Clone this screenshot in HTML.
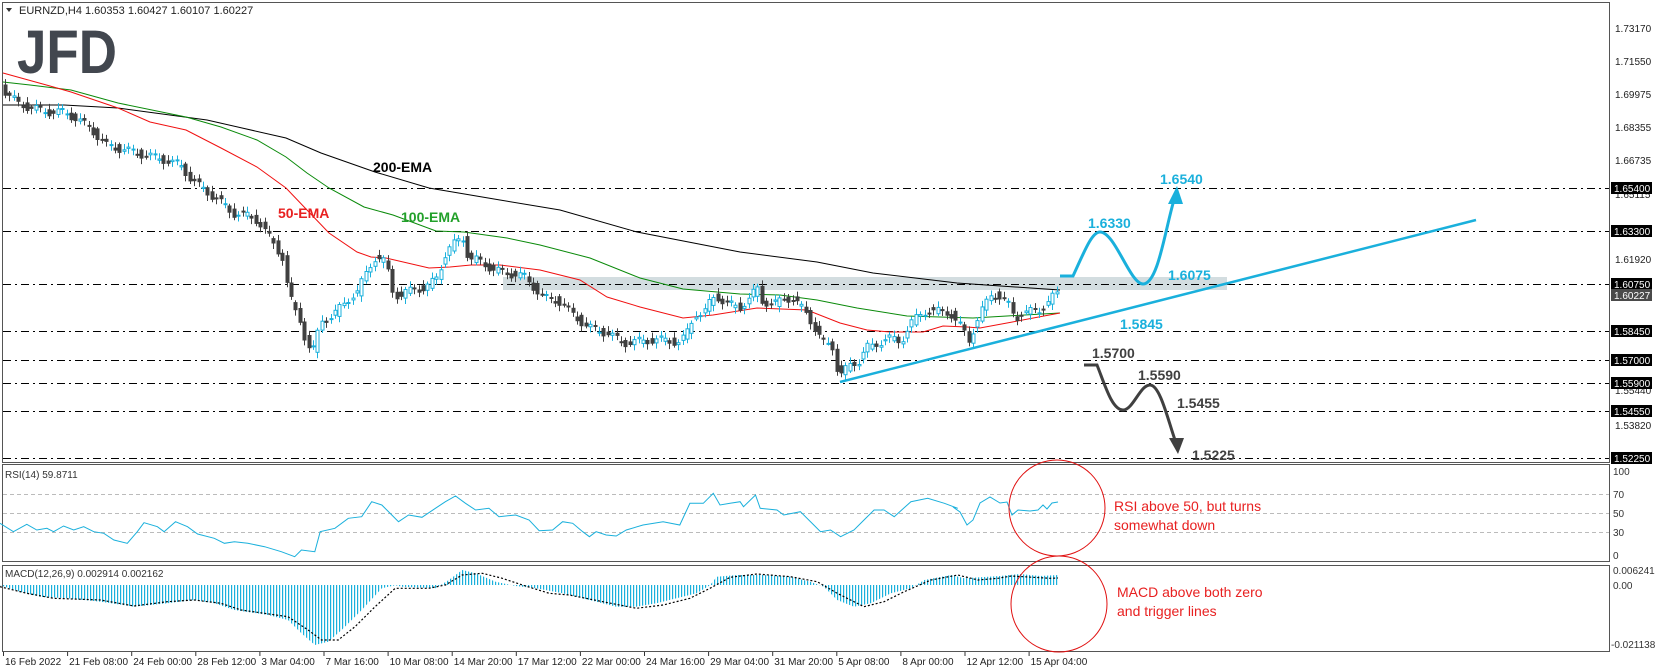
<!DOCTYPE html>
<html><head><meta charset="utf-8"><style>
html,body{margin:0;padding:0;background:#fff;}
svg{display:block;font-family:"Liberation Sans",sans-serif;}
</style></head><body>
<svg id="s" width="1655" height="672" viewBox="0 0 1655 672" xmlns="http://www.w3.org/2000/svg">
<defs>
<pattern id="hb" width="3" height="10" patternUnits="userSpaceOnUse"><rect x="0" y="0" width="1.2" height="10" fill="#1ab0dc"/></pattern>
</defs>
<rect width="1655" height="672" fill="#fff"/>
<g fill="none" stroke="#555" stroke-width="1">
<rect x="2.5" y="2.5" width="1607" height="460"/>
<rect x="2.5" y="464.5" width="1607" height="97"/>
<rect x="2.5" y="565.5" width="1607" height="86"/>
</g>
<path d="M6 8 L12 8 L9 12 Z" fill="#333"/>
<text x="19" y="14" font-size="11" fill="#222">EURNZD,H4  1.60353 1.60427 1.60107 1.60227</text>
<text x="17" y="73" font-size="61" font-weight="bold" fill="#42474f" textLength="100" lengthAdjust="spacingAndGlyphs">JFD</text>
<rect x="503" y="277" width="724" height="13" fill="#d3dde0"/>
<g stroke="#000" stroke-width="1" stroke-dasharray="8 4 2 4" fill="none">
<line x1="3" y1="188.5" x2="1609" y2="188.5"/>
<line x1="3" y1="231.5" x2="1609" y2="231.5"/>
<line x1="3" y1="284.5" x2="1609" y2="284.5"/>
<line x1="3" y1="331.5" x2="1609" y2="331.5"/>
<line x1="3" y1="360.5" x2="1609" y2="360.5"/>
<line x1="3" y1="383.5" x2="1609" y2="383.5"/>
<line x1="3" y1="411.5" x2="1609" y2="411.5"/>
<line x1="3" y1="458.5" x2="1609" y2="458.5"/>
</g>
<polyline fill="none" stroke="#000" stroke-width="1" points="3,105 64,105 118,108 207,120 286,138 321,153 375,172 429,188 500,200 560,210 637,232 740,252 817,262 873,273 957,283 1060,290"/>
<polyline fill="none" stroke="#0a8a0a" stroke-width="1" points="3,82 30,85 71,90 118,103 186,117 221,127 257,140 286,157 307,173 329,188 364,207 393,215 436,231 464,232 507,238 540,245 590,258 640,278 683,289 740,294 780,295 817,300 857,308 907,316 973,318 1007,316 1060,313"/>
<polyline fill="none" stroke="#f01010" stroke-width="1" points="3,73 50,86 71,92 118,108 150,122 186,130 221,148 257,167 286,188 307,210 329,233 357,252 371,257 386,258 429,268 450,267 471,265 500,265 540,270 580,280 607,297 640,307 683,318 713,315 757,308 807,310 840,323 867,330 890,332 923,332 943,326 967,327 980,328 1007,323 1060,313"/>
<g id="candles"></g>
<line x1="840" y1="382" x2="1476" y2="220" stroke="#1ab0dc" stroke-width="2.5"/>
<g font-size="14" font-weight="bold">
<text x="373" y="172" fill="#000">200-EMA</text>
<text x="278" y="218" fill="#e82020">50-EMA</text>
<text x="401" y="222" fill="#22a02a">100-EMA</text>
</g>
<path d="M1060 276 L1073 276 C1085 250 1092 232 1100 232 C1115 232 1130 284 1143 284 C1158 284 1165 230 1174 200" fill="none" stroke="#1ab0dc" stroke-width="3"/>
<path d="M1177 186 L1168 204 L1183 204 Z" fill="#1ab0dc"/>
<g font-size="14" font-weight="bold" fill="#1ab0dc">
<text x="1160" y="184">1.6540</text>
<text x="1088" y="228">1.6330</text>
<text x="1168" y="280">1.6075</text>
<text x="1120" y="329">1.5845</text>
</g>
<path d="M1084 365 L1097 365 C1105 385 1112 410 1123 410 C1133 410 1140 385 1150 385 C1160 385 1168 420 1175 440" fill="none" stroke="#404040" stroke-width="3"/>
<path d="M1178 454 L1169 438 L1184 438 Z" fill="#404040"/>
<g font-size="14" font-weight="bold" fill="#404040">
<text x="1092" y="358">1.5700</text>
<text x="1138" y="380">1.5590</text>
<text x="1177" y="408">1.5455</text>
<text x="1192" y="460">1.5225</text>
</g>
<g font-size="10" fill="#222">
<text x="1615" y="32">1.73170</text>
<text x="1615" y="65">1.71550</text>
<text x="1615" y="98">1.69975</text>
<text x="1615" y="131">1.68355</text>
<text x="1615" y="164">1.66735</text>
<text x="1615" y="198">1.65115</text>
<text x="1615" y="263">1.61920</text>
<text x="1615" y="394">1.55440</text>
<text x="1615" y="429">1.53820</text>
</g>
<g fill="#000">
<rect x="1611" y="182" width="41" height="12"/><rect x="1611" y="225" width="41" height="12"/>
<rect x="1611" y="278" width="41" height="12"/><rect x="1611" y="325" width="41" height="12"/>
<rect x="1611" y="354" width="41" height="12"/><rect x="1611" y="377" width="41" height="12"/>
<rect x="1611" y="405" width="41" height="12"/><rect x="1611" y="452" width="41" height="12"/>
</g>
<rect x="1611" y="289" width="41" height="12" fill="#4a4a4a"/>
<g font-size="10" fill="#fff">
<text x="1614" y="192">1.65400</text><text x="1614" y="235">1.63300</text>
<text x="1614" y="288">1.60750</text><text x="1614" y="299">1.60227</text>
<text x="1614" y="335">1.58450</text><text x="1614" y="364">1.57000</text>
<text x="1614" y="387">1.55900</text><text x="1614" y="415">1.54550</text>
<text x="1614" y="462">1.52250</text>
</g>
<text x="5" y="478" font-size="10" fill="#333">RSI(14) 59.8711</text>
<g stroke="#bbb" stroke-dasharray="4 3">
<line x1="3" y1="494.5" x2="1609" y2="494.5"/><line x1="3" y1="513.5" x2="1609" y2="513.5"/><line x1="3" y1="532.5" x2="1609" y2="532.5"/>
</g>
<polyline id="rsi" fill="none" stroke="#1ab0dc" stroke-width="1"/>
<g font-size="10" fill="#333">
<text x="1613" y="475">100</text><text x="1613" y="498">70</text><text x="1613" y="517">50</text><text x="1613" y="536">30</text><text x="1613" y="559">0</text>
<text x="1613" y="574">0.006241</text><text x="1613" y="589">0.00</text><text x="1611" y="648">-0.021138</text>
</g>
<text x="5" y="577" font-size="10" fill="#333">MACD(12,26,9) 0.002914 0.002162</text>
<polygon id="hist" fill="url(#hb)"/>
<polyline id="sig" fill="none" stroke="#000" stroke-width="1.2" stroke-dasharray="2 2"/>
<circle cx="1057" cy="508" r="48" fill="none" stroke="#e01010" stroke-width="1"/>
<circle cx="1059" cy="604" r="48" fill="none" stroke="#e01010" stroke-width="1"/>
<g font-size="14" fill="#e82020">
<text x="1114" y="511">RSI above 50, but turns</text>
<text x="1114" y="530">somewhat down</text>
<text x="1117" y="597">MACD above both zero</text>
<text x="1117" y="616">and trigger lines</text>
</g>
<g id="tax" font-size="10" fill="#222"></g>
</svg>
<script>
(function(){
var NS="http://www.w3.org/2000/svg";
function el(t,a,p){var e=document.createElementNS(NS,t);for(var k in a)e.setAttribute(k,a[k]);(p||document.getElementById('s')).appendChild(e);return e;}
function interp(P,x){for(var i=1;i<P.length;i++){if(x<=P[i][0]){var a=P[i-1],b=P[i];var t=(x-a[0])/((b[0]-a[0])||1);return a[1]+t*(b[1]-a[1]);}}return P[P.length-1][1];}
var C=[[3,90],[10,97],[18,103],[30,108],[50,112],[64,112],[75,118],[90,128],[105,145],[125,150],[145,155],[165,160],[180,165],[190,178],[200,187],[218,200],[232,213],[245,215],[257,220],[271,240],[284,260],[287,287],[293,307],[300,320],[307,347],[314,350],[320,320],[332,317],[346,300],[357,293],[368,267],[375,258],[386,263],[393,293],[400,297],[414,287],[425,290],[436,277],[446,253],[457,240],[464,237],[468,260],[479,260],[493,270],[507,273],[525,277],[536,290],[543,298],[557,300],[587,327],[607,333],[623,343],[650,340],[667,340],[680,343],[688,330],[695,313],[703,315],[712,297],[720,297],[723,303],[740,307],[750,298],[757,287],[760,300],[773,305],[785,297],[793,300],[807,313],[815,330],[823,343],[832,345],[835,365],[840,375],[850,365],[860,360],[865,347],[873,347],[887,337],[900,343],[910,323],[927,310],[950,313],[963,330],[968,342],[980,313],[992,293],[1000,297],[1010,307],[1015,320],[1020,313],[1040,310],[1052,297],[1060,293]];
var g=document.getElementById('candles');
for(var x=5;x<=1058;x+=4.4){var o=interp(C,x-4.4)+Math.sin(x*2.3)*3,c=interp(C,x)+Math.sin(x*1.7)*4;var tp=Math.min(o,c),bt=Math.max(o,c);var up=c<o;var cx=Math.round(x)+0.5;
var col=up?'#1ab0dc':'#404040';
el('line',{x1:cx,x2:cx,y1:(tp-2-Math.abs(Math.sin(x))*4).toFixed(1),y2:(bt+2+Math.abs(Math.cos(x))*4).toFixed(1),stroke:col,'stroke-width':1},g);
el('rect',{x:cx-1.5,y:tp.toFixed(1),width:3,height:Math.max(1,bt-tp).toFixed(1),fill:up?'#fff':'#404040',stroke:col,'stroke-width':1},g);}
function map6(a){return a.map(function(p){return [+(p[0]/1.493).toFixed(1),+(460+p[1]/3).toFixed(1)];});}
var R=map6([[0,190],[20,215],[40,193],[55,210],[70,205],[80,215],[95,198],[110,210],[125,200],[140,215],[155,220],[170,240],[190,250],[205,215],[215,188],[235,200],[245,215],[262,185],[280,200],[295,222],[320,235],[335,250],[350,245],[370,250],[395,260],[420,275],[440,290],[450,270],[470,275],[478,215],[500,205],[520,175],[540,170],[555,125],[570,135],[585,165],[595,185],[610,165],[630,172],[650,145],[665,125],[680,108],[695,130],[710,150],[730,145],[745,170],[770,165],[790,180],[805,212],[825,210],[840,185],[855,190],[870,215],[880,230],[890,215],[905,225],[920,228],[935,210],[960,195],[990,185],[1015,195],[1030,130],[1050,130],[1065,100],[1075,135],[1090,130],[1105,125],[1110,140],[1128,105],[1135,145],[1160,150],[1170,165],[1195,155],[1215,195],[1225,215],[1240,210],[1255,230],[1275,210],[1290,180],[1305,150],[1320,150],[1335,170],[1360,125],[1385,115],[1410,130],[1430,145]]);
R=R.concat([[953,507],[960,512],[967,525],[973,520],[980,503],[990,497],[1000,503],[1007,502],[1012,515],[1018,510],[1030,511],[1038,510],[1043,505],[1047,509],[1052,503],[1058,502]]);
document.getElementById('rsi').setAttribute('points',R.map(function(p){return p.join(',');}).join(' '));
var H=map6([[0,376],[30,395],[60,410],[100,415],[150,425],[200,440],[250,430],[290,420],[320,430],[350,450],[400,465],[430,480],[450,520],[470,555],[490,545],[510,510],[540,450],[570,385],[590,376],[600,380],[650,385],[670,360],[690,330],[710,340],[740,365],[770,378],[800,385],[840,400],[880,420],[920,440],[950,440],[980,430],[1010,415],[1040,400],[1060,376],[1070,350],[1100,345],[1140,345],[1180,350],[1210,365],[1230,380],[1250,420],[1275,440],[1300,430],[1330,400],[1360,385],[1380,360],[1420,345],[1440,355]]).concat([[1000,576],[1020,574],[1040,576],[1058,575]]);
var hp=[[3,585]].concat(H).concat([[1058,585]]);
document.getElementById('hist').setAttribute('points',hp.map(function(p){return p.join(',');}).join(' '));
var S=map6([[0,380],[40,400],[80,415],[150,420],[200,438],[250,425],[290,420],[330,430],[360,450],[430,470],[460,510],[480,540],[505,540],[530,500],[560,440],[590,385],[640,385],[665,375],[690,345],[720,340],[750,355],[780,375],[820,400],[850,405],[900,425],[950,445],[990,435],[1030,415],[1060,385],[1090,352],[1130,342],[1180,350],[1220,365],[1250,400],[1290,440],[1320,425],[1350,395],[1390,360],[1430,345],[1460,360],[1490,355],[1510,348],[1568,355]]).concat([[1058,578]]);
document.getElementById('sig').setAttribute('points',S.map(function(p){return p.join(',');}).join(' '));
var T=["16 Feb 2022","21 Feb 08:00","24 Feb 00:00","28 Feb 12:00","3 Mar 04:00","7 Mar 16:00","10 Mar 08:00","14 Mar 20:00","17 Mar 12:00","22 Mar 00:00","24 Mar 16:00","29 Mar 04:00","31 Mar 20:00","5 Apr 08:00","8 Apr 00:00","12 Apr 12:00","15 Apr 04:00"];
var ta=document.getElementById('tax');
for(var i=0;i<T.length;i++){var tx=3+i*64.1;el('line',{x1:tx+0.5,x2:tx+0.5,y1:652,y2:656,stroke:'#333'},ta);var t=el('text',{x:tx+2,y:665},ta);t.textContent=T[i];}
})();
</script>
</body></html>
